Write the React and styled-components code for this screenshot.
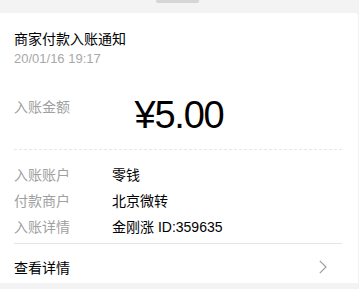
import React from 'react'
import styled, { createGlobalStyle } from 'styled-components'

const Global = createGlobalStyle`
  html, body {
    margin: 0;
    padding: 0;
    background: #f3f3f3;
    font-family: "Liberation Sans", "Noto Sans CJK SC", sans-serif;
  }
`

const Page = styled.div`
  width: 359px;
  height: 289px;
  overflow: hidden;
  display: flex;
  flex-direction: column;
  align-items: stretch;
`

const TimeTag = styled.div`
  align-self: flex-start;
  margin-left: 156px;
  width: 43px;
  height: 3px;
  background: #d6d6d6;
  border-radius: 0 0 2px 2px;
  margin-bottom: 10px;
`

const Card = styled.div`
  margin-right: 1px;
  background: #fff;
  border-top-right-radius: 3px;
  padding: 16px 16px 5px 14px;
  display: flex;
  flex-direction: column;
`

const Title = styled.div`
  font-size: 14px;
  line-height: 20px;
  color: #000;
`

const Time = styled.div`
  font-size: 13px;
  line-height: 18px;
  color: #a8a8a8;
  margin-top: 1px;
`

const AmountBlock = styled.div`
  display: grid;
  margin-top: 29px;
  padding-bottom: 14px;
  border-bottom: 1px dashed #e6e6e6;
`

const AmountLabel = styled.div`
  grid-area: 1 / 1;
  justify-self: start;
  font-size: 14px;
  line-height: 20px;
  color: #a0a0a0;
`

const Amount = styled.div`
  grid-area: 1 / 1;
  justify-self: center;
  margin-left: 2px;
  font-size: 38px;
  letter-spacing: -1.2px;
  line-height: 40px;
  margin-top: -2px;
  color: #000;
`

const Rows = styled.div`
  display: flex;
  flex-direction: column;
  padding: 12px 0 3px;
  border-bottom: 1px solid #e5e5e5;
`

const Row = styled.div`
  display: flex;
  font-size: 14px;
  line-height: 26px;
`

const Label = styled.span`
  width: 98px;
  color: #a0a0a0;
`

const Value = styled.span`
  color: #000;
`

const Footer = styled.div`
  display: flex;
  align-items: center;
  justify-content: space-between;
  padding-top: 14px;
  font-size: 14px;
  line-height: 20px;
  color: #000;
`

const Chevron = styled.svg`
  width: 8px;
  height: 14px;
  margin-right: 15px;
  margin-top: -3px;
`

const details = [
  ['入账账户', '零钱'],
  ['付款商户', '北京微转'],
  ['入账详情', '金刚涨 ID:359635'],
]

export default function App() {
  return (
    <Page>
      <Global />
      <TimeTag />
      <Card>
        <Title>商家付款入账通知</Title>
        <Time>20/01/16 19:17</Time>
        <AmountBlock>
          <AmountLabel>入账金额</AmountLabel>
          <Amount>¥5.00</Amount>
        </AmountBlock>
        <Rows>
          {details.map(([k, v]) => (
            <Row key={k}>
              <Label>{k}</Label>
              <Value>{v}</Value>
            </Row>
          ))}
        </Rows>
        <Footer>
          <span>查看详情</span>
          <Chevron viewBox="0 0 8 14">
            <polyline points="0.8,0.8 7,7 0.8,13.2" fill="none" stroke="#9a9a9a" strokeWidth="1.1" />
          </Chevron>
        </Footer>
      </Card>
    </Page>
  )
}
